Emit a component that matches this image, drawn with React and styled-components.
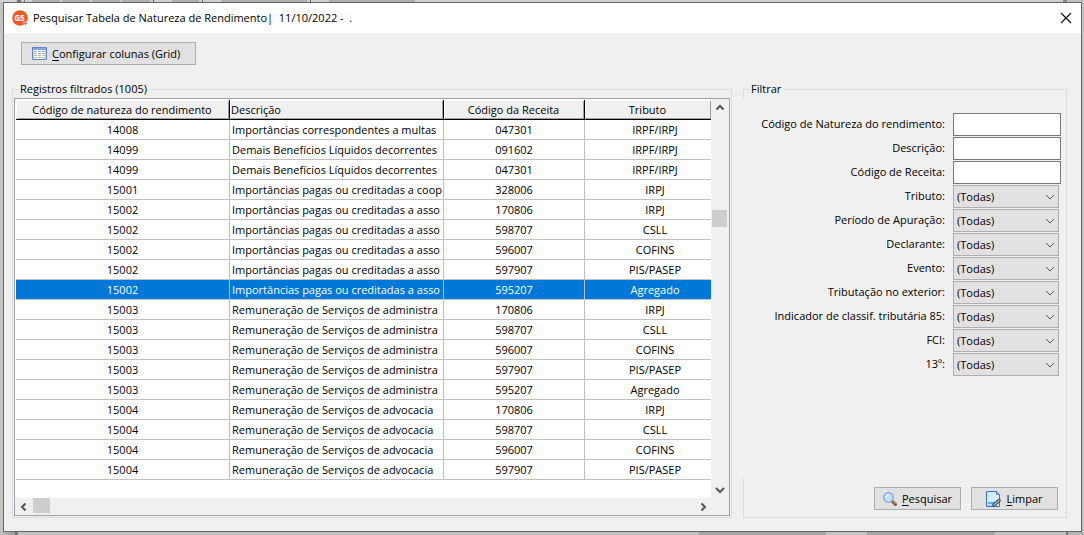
import React, { useState } from "react";
import styled, { createGlobalStyle } from "styled-components";

const GlobalStyle = createGlobalStyle`
	* {
		box-sizing: border-box;
	}
	body {
		margin: 0;
		color: #000;
		background-color: #c4c4c4;
		font-family: "Open Sans", "Noto Sans", sans-serif;
		font-size: 11px;
		line-height: 16px;
	}
	button, input, select {
		font: inherit;
		color: inherit;
	}
`;

const Desktop = styled.div`
	min-height: 100vh;
	display: flex;
	flex-direction: column;
	background-color: #c4c4c4;
`;

// what is left of the main screen above and below the dialog
const TopStrip = styled.div`
	height: 2px;
	background: linear-gradient(
		90deg,
		#d4d4d4 17px, #777 17px 21px, #ccc 21px 24px, #777 24px 25px, #d0d0d0 25px 32px,
		#b0b0b0 32px 60px, #d0d0d0 60px 62px, #b0b0b0 62px 90px, #d0d0d0 90px 92px,
		#b0b0b0 92px 120px, #d0d0d0 120px 122px, #b0b0b0 122px 150px, #d0d0d0 150px 153px,
		#666 153px 154px, #d0d0d0 154px 172px, #b0b0b0 172px 199px, #d0d0d0 199px 202px,
		#666 202px 203px, #d0d0d0 203px 221px, #b0b0b0 221px 307px, #d0d0d0 307px 310px,
		#666 310px 311px, #d0d0d0 311px 329px, #b0b0b0 329px 415px, #d0d0d0 415px 1063px,
		#888 1063px 1067px, #c0c0c0 1067px
	);
`;

const BottomStrip = styled.div`
	height: 3px;
	background: linear-gradient(
		90deg,
		#c0c0c0, #999 15px, #777 15px 18px, #c0c0c0 18px 699px, #a4a4a4 699px 826px,
		#c4c4c4 826px 867px, #a4a4a4 867px 995px, #c0c0c0 995px 1066px, #777 1066px 1068px,
		#b4b4b4 1068px
	);
`;

const Window = styled.main`
	flex: 1;
	display: flex;
	flex-direction: column;
	margin: 0 2px 0 3px;
	border: 1px solid #666;
	background-color: #f0f0f0;
`;

const TitleBar = styled.header`
	display: flex;
	align-items: center;
	height: 30px;
	padding: 0 9px 0 8px;
	background-color: #fff;
`;

const Title = styled.h1`
	flex: 1;
	margin: 0 0 0 5px;
	font-size: 11px;
	font-weight: normal;
	white-space: pre;
`;

const CloseButton = styled.button`
	display: flex;
	padding: 0;
	border: 0;
	background: none;
`;

const Toolbar = styled.div`
	padding: 9px 17px 0;
`;

const Button = styled.button`
	display: inline-flex;
	align-items: center;
	justify-content: ${(props) => (props.$wide ? "flex-start" : "center")};
	gap: 5px;
	height: 23px;
	min-width: ${(props) => (props.$wide ? "175px" : "87px")};
	padding: 0 ${(props) => (props.$wide ? "10px" : "7px")};
	border: 1px solid #adadad;
	background-color: #e1e1e1;
	white-space: nowrap;

	u {
		text-underline-offset: 2px;
	}
`;

const Content = styled.div`
	flex: 1;
	display: grid;
	grid-template-columns: 1fr 324px;
	gap: 11px;
	padding: 16px 14px 13px 8px;
`;

const Group = styled.fieldset`
	display: flex;
	flex-direction: column;
	min-width: 0;
	margin: 0;
	padding: 1px;
	border: 1px solid #dcdcdc;
`;

const Legend = styled.legend`
	margin-left: 4px;
	padding: 0 2px;
`;

const GridFrame = styled.div`
	flex: 1;
	display: grid;
	grid-template-columns: 1fr 18px;
	grid-template-rows: 1fr 17px;
	border: 1px solid #a0a0aa;
	background-color: #f0f0f0;
`;

const TableArea = styled.div`
	padding: 1px 0 0 1px;
	background-color: #fff;
	overflow: hidden;
`;

const Table = styled.table`
	width: 100%;
	table-layout: fixed;
	border-collapse: separate;
	border-spacing: 0;
`;

const HeadCell = styled.th`
	width: ${(props) => props.$width || "auto"};
	height: 20px;
	padding: 0 2px 0 1px;
	border-right: 1px solid #000;
	border-bottom: 1px solid #000;
	background-color: #f0f0f0;
	box-shadow: inset 1px 1px #fff, inset -1px -1px #a0a0a0;
	font-weight: normal;
	text-align: ${(props) => props.$align || "center"};
	white-space: nowrap;

	&:last-child {
		border-right: 0;
	}
`;

const Row = styled.tr`
	color: ${(props) => (props.$selected ? "#fff" : "#000")};
	background-color: ${(props) => (props.$selected ? "#0078d7" : "#fff")};
`;

const Cell = styled.td`
	height: 20px;
	padding: 0 0 0 ${(props) => (props.$align ? "2px" : 0)};
	border-right: 1px solid #c0c0c0;
	border-bottom: 1px solid #c0c0c0;
	text-align: ${(props) => props.$align || "center"};
	white-space: nowrap;
	overflow: hidden;

	&:last-child {
		padding-left: 14px;
		border-right: 0;
	}
`;

const ScrollBar = styled.div`
	display: flex;
	flex-direction: ${(props) => (props.$vertical ? "column" : "row")};
	background-color: #f0f0f0;
`;

const ScrollArrow = styled.button`
	display: flex;
	align-items: center;
	justify-content: center;
	width: 17px;
	height: 17px;
	padding: 0;
	border: 0;
	background: none;
`;

const Track = styled.div`
	flex: 1;
	display: flex;
	flex-direction: ${(props) => (props.$vertical ? "column" : "row")};
	padding-top: ${(props) => (props.$vertical ? "94px" : 0)};
	padding-left: 1px;
`;

const Thumb = styled.div`
	width: ${(props) => (props.$vertical ? "15px" : "17px")};
	height: ${(props) => (props.$vertical ? "17px" : "15px")};
	background-color: #cdcdcd;
`;

// covers the left line of the group box
const FilterPanel = styled.div`
	flex: 1;
	display: flex;
	flex-direction: column;
	gap: 1px;
	margin-left: -2px;
	padding: 15px 4px 0 0;
	background-color: #f0f0f0;
`;

const Field = styled.div`
	display: grid;
	grid-template-columns: 1fr 108px;
	gap: 8px;
	height: 23px;
`;

const Label = styled.label`
	padding-top: 3px;
	text-align: right;
`;

const Input = styled.input`
	width: 100%;
	height: 23px;
	padding: 0 4px;
	border: 1px solid #7a7a7a;
	border-radius: 0;
	background-color: #fff;
`;

const SelectBox = styled.div`
	display: grid;
	width: 106px;
	height: 23px;

	> * {
		grid-area: 1 / 1;
	}
	svg {
		place-self: center end;
		margin-right: 4px;
		pointer-events: none;
	}
`;

const Select = styled.select`
	appearance: none;
	height: 23px;
	padding: 1px 20px 0 3px;
	border: 1px solid #adadad;
	border-radius: 0;
	background-color: #e1e1e1;
`;

const Actions = styled.div`
	display: flex;
	justify-content: flex-end;
	gap: 10px;
	padding: 8px 7px 6px;
`;

const arrows = {
	up: "M1.5 6.5 5 3l3.5 3.5",
	down: "M1 3l4 4 4-4",
	left: "M6.5 1.5 3 5l3.5 3.5",
	right: "M3.5 1.5 7 5 3.5 8.5",
};

const Arrow = ({ direction, strokeWidth = 2 }) => (
	<svg width="10" height="10" viewBox="0 0 10 10" fill="none">
		<path d={arrows[direction]} stroke="#555" strokeWidth={strokeWidth} />
	</svg>
);

const LogoIcon = () => (
	<svg width="16" height="16" viewBox="0 0 16 16">
		<circle cx="8" cy="8" r="7.8" fill="#f05a22" />
		<text x="7.5" y="10.6" fill="#fff" fontSize="8" fontWeight="bold" textAnchor="middle">
			G5
		</text>
		<path d="M11.500 11.500h4.500v4.500h-4.500z" fill="#fff" opacity=".7" />
		<path d="m12.500 12.500 1 2 1.500-2" fill="none" stroke="#7c3d4e" />
	</svg>
);

const CloseIcon = () => (
	<svg width="12" height="12" viewBox="0 0 12 12">
		<path d="m1 1 10 10M11 1 1 11" stroke="#000" strokeWidth="1.1" />
	</svg>
);

const GridIcon = () => (
	<svg width="15" height="13" viewBox="0 0 15 13">
		<path d="M.5.5h14v12H.5z" fill="#fff" stroke="#5a84cc" />
		<path d="M1 1h13v2H1z" fill="#7da7e6" />
		<path d="M1 3h1v9H1zM13 3h1v9h-1z" fill="#c4d8f4" />
		<path
			d="M2 4.500h3M6 4.500h3M10 4.500h3M2 6.500h3M6 6.500h3M10 6.500h3M2 8.500h3M6 8.500h3M10 8.500h3M2 10.500h3M6 10.500h3M10 10.500h3"
			stroke="#b4b4b4"
		/>
	</svg>
);

const SearchIcon = () => (
	<svg width="14" height="14" viewBox="0 0 14 14">
		<path d="m9 9 3.5 3.5" stroke="#8a4a20" strokeWidth="3" strokeLinecap="round" />
		<path d="m9.5 9 3 3" stroke="#e6a468" strokeWidth="1" strokeLinecap="round" />
		<circle cx="5.5" cy="5.5" r="4.8" fill="#c3e0fb" stroke="#7b9fdc" strokeWidth="1.2" />
		<path d="M2.8 5.5a3 3 0 0 1 3-2.7" fill="none" stroke="#fff" strokeWidth="1.2" />
	</svg>
);

const ClearIcon = () => (
	<svg width="15" height="16" viewBox="0 0 15 16">
		<path d="M.5.5h10l3 3v12H.5z" fill="#d7eafc" stroke="#3a74c8" />
		<path d="M10.5.5v3h3z" fill="#fff" stroke="#3a74c8" strokeWidth=".8" />
		<path d="M2 11h8v2H2z" fill="#53b4ef" />
		<path d="M1 13.500h9v1.500H1z" fill="#a5d4f7" />
		<path d="m8 14 5-4.500" stroke="#3f4a58" strokeWidth="3.500" strokeLinecap="round" />
		<path d="m8 14 5-4.500" stroke="#a9b4c0" strokeWidth="1.500" strokeLinecap="round" />
	</svg>
);

const COOP = "Importâncias pagas ou creditadas a coop";
const ASSOC = "Importâncias pagas ou creditadas a asso";
const ADMIN = "Remuneração de Serviços de administra";
const LAW = "Remuneração de Serviços de advocacia";

const rows = [
	["14008", "Importâncias correspondentes a multas", "047301", "IRPF/IRPJ"],
	["14099", "Demais Benefícios Líquidos decorrentes", "091602", "IRPF/IRPJ"],
	["14099", "Demais Benefícios Líquidos decorrentes", "047301", "IRPF/IRPJ"],
	["15001", COOP, "328006", "IRPJ"],
	["15002", ASSOC, "170806", "IRPJ"],
	["15002", ASSOC, "598707", "CSLL"],
	["15002", ASSOC, "596007", "COFINS"],
	["15002", ASSOC, "597907", "PIS/PASEP"],
	["15002", ASSOC, "595207", "Agregado"],
	["15003", ADMIN, "170806", "IRPJ"],
	["15003", ADMIN, "598707", "CSLL"],
	["15003", ADMIN, "596007", "COFINS"],
	["15003", ADMIN, "597907", "PIS/PASEP"],
	["15003", ADMIN, "595207", "Agregado"],
	["15004", LAW, "170806", "IRPJ"],
	["15004", LAW, "598707", "CSLL"],
	["15004", LAW, "596007", "COFINS"],
	["15004", LAW, "597907", "PIS/PASEP"],
];

const textFilters = ["Código de Natureza do rendimento:", "Descrição:", "Código de Receita:"];

const selectFilters = [
	"Tributo:",
	"Período de Apuração:",
	"Declarante:",
	"Evento:",
	"Tributação no exterior:",
	"Indicador de classif. tributária 85:",
	"FCI:",
	"13º:",
];

const ResultsGrid = () => {
	const [selected, setSelected] = useState(8);

	return (
		<Group>
			<Legend>Registros filtrados (1005)</Legend>
			<GridFrame>
				<TableArea>
					<Table>
						<thead>
							<tr>
								<HeadCell $width="214px">Código de natureza do rendimento</HeadCell>
								<HeadCell $width="214px" $align="left">
									Descrição
								</HeadCell>
								<HeadCell $width="141px">Código da Receita</HeadCell>
								<HeadCell>Tributo</HeadCell>
							</tr>
						</thead>
						<tbody>
							{rows.map(([code, description, revenue, tax], index) => (
								<Row
									key={index}
									$selected={index === selected}
									onClick={() => setSelected(index)}
								>
									<Cell>{code}</Cell>
									<Cell $align="left">{description}</Cell>
									<Cell>{revenue}</Cell>
									<Cell>{tax}</Cell>
								</Row>
							))}
						</tbody>
					</Table>
				</TableArea>
				<ScrollBar $vertical>
					<ScrollArrow aria-label="Rolar para cima">
						<Arrow direction="up" />
					</ScrollArrow>
					<Track $vertical>
						<Thumb $vertical />
					</Track>
					<ScrollArrow aria-label="Rolar para baixo">
						<Arrow direction="down" />
					</ScrollArrow>
				</ScrollBar>
				<ScrollBar>
					<ScrollArrow aria-label="Rolar para a esquerda">
						<Arrow direction="left" />
					</ScrollArrow>
					<Track>
						<Thumb />
					</Track>
					<ScrollArrow aria-label="Rolar para a direita">
						<Arrow direction="right" />
					</ScrollArrow>
				</ScrollBar>
			</GridFrame>
		</Group>
	);
};

const Filters = () => (
	<Group>
		<Legend>Filtrar</Legend>
		<FilterPanel>
			{textFilters.map((label, index) => (
				<Field key={label}>
					<Label htmlFor={`text-${index}`}>{label}</Label>
					<Input id={`text-${index}`} type="text" />
				</Field>
			))}
			{selectFilters.map((label, index) => (
				<Field key={label}>
					<Label htmlFor={`select-${index}`}>{label}</Label>
					<SelectBox>
						<Select id={`select-${index}`}>
							<option>(Todas)</option>
						</Select>
						<Arrow direction="down" strokeWidth={1} />
					</SelectBox>
				</Field>
			))}
		</FilterPanel>
		<Actions>
			<Button type="button">
				<SearchIcon />
				<span>
					<u>P</u>esquisar
				</span>
			</Button>
			<Button type="button">
				<ClearIcon />
				<span>
					<u>L</u>impar
				</span>
			</Button>
		</Actions>
	</Group>
);

const App = () => (
	<>
		<GlobalStyle />
		<Desktop>
			<TopStrip />
			<Window>
				<TitleBar>
					<LogoIcon />
					<Title>{"Pesquisar Tabela de Natureza de Rendimento|  11/10/2022 -  ."}</Title>
					<CloseButton aria-label="Fechar">
						<CloseIcon />
					</CloseButton>
				</TitleBar>
				<Toolbar>
					<Button type="button" $wide>
						<GridIcon />
						<span>
							<u>C</u>onfigurar colunas (Grid)
						</span>
					</Button>
				</Toolbar>
				<Content>
					<ResultsGrid />
					<Filters />
				</Content>
			</Window>
			<BottomStrip />
		</Desktop>
	</>
);

export default App;
